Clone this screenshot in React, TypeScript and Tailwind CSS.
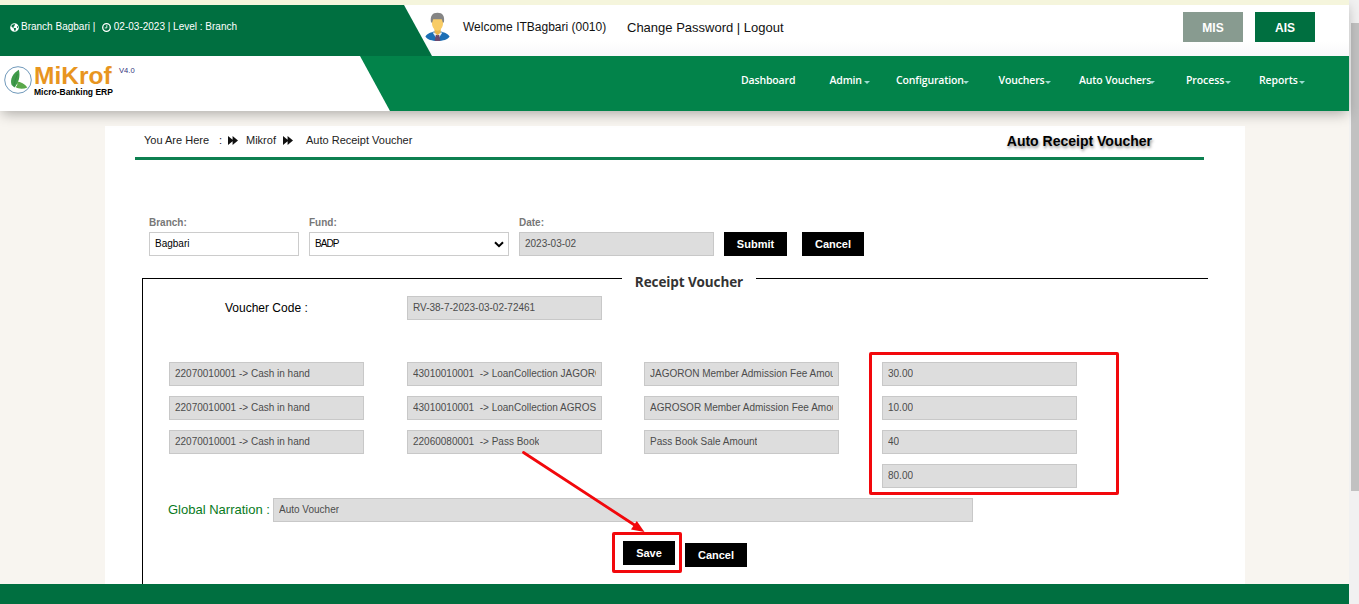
import React from "react";
import { FaGlobeAmericas } from "react-icons/fa";

function Field({ children, className = "w-[195px]" }: { children?: React.ReactNode; className?: string }) {
  return (
    <div className={`flex h-6 shrink-0 items-center border border-[#c8c8c8] bg-[#ddd] px-[5px] pb-[2px] text-[10px] text-[#4c4c4c] ${className}`}>
      <span className="overflow-hidden whitespace-pre">{children}</span>
    </div>
  );
}

function BlackButton({ children, className = "" }: { children: React.ReactNode; className?: string }) {
  return (
    <button className={`h-6 shrink-0 bg-black text-center text-[11px] font-bold text-white ${className}`}>{children}</button>
  );
}

function Label({ children }: { children: React.ReactNode }) {
  return <div className="h-[16px] text-[10px] leading-[14px] font-bold text-[#777]">{children}</div>;
}

function NavItem({ label, width, gap, caret = true }: { label: string; width: string; gap?: string; caret?: boolean }) {
  return (
    <li className={`flex shrink-0 items-center whitespace-nowrap ${width}`}>
      <span>{label}</span>
      {caret && (
        <span className={`mt-[2px] border-x-[3px] border-t-[3px] border-x-transparent border-t-[#9adbd0] ${gap ?? ""}`} />
      )}
    </li>
  );
}

function FastForward({ className = "" }: { className?: string }) {
  return (
    <svg className={`shrink-0 ${className}`} width="10" height="9" viewBox="0 0 10 9">
      <path d="M0 0 L4.6 3.8 V0 L10 4.5 L4.6 9 V5.2 L0 9 Z" fill="#111" />
    </svg>
  );
}

function Clock() {
  return (
    <svg className="mt-[2.5px] mr-[2px] ml-[7px] size-[9px] shrink-0" viewBox="0 0 9 9">
      <circle cx="4.5" cy="4.5" r="3.8" fill="none" stroke="#fff" strokeWidth="1.3" />
      <path d="M4.8 2.2 V4.9 H2.8" fill="none" stroke="#fff" strokeWidth="0.9" />
    </svg>
  );
}

function LeafLogo() {
  return (
    <svg className="shrink-0" width="28" height="28" viewBox="0 0 28 28">
      <circle cx="14" cy="14" r="13.3" fill="#fff" stroke="#4b7fa8" strokeWidth="0.8" />
      <path d="M14.8 3.8 C9 7.5 5.6 13 7.6 19 L10.6 21.4 C14.6 17 16.6 10 14.8 3.8 Z" fill="#3f9a49" />
      <path d="M13.4 8 C12 12 10.4 16 9.8 20.4" fill="none" stroke="#2a7a3c" strokeWidth="0.5" />
      <path d="M12.6 15.6 C17 15.8 20.6 18 23.4 21.4 C19 23.4 14.2 22.8 11.4 21 C13.6 20 13.8 18 12.6 15.6 Z" fill="#5aa84a" />
    </svg>
  );
}

function Avatar() {
  return (
    <svg className="shrink-0" width="25" height="30" viewBox="0 0 25 30">
      <path d="M0.4 24.5 C2 21 7 20.2 9 19.4 H16 C18 20.2 23 21 24.6 24.5 C23 27.5 18 29 12.5 29 S2 27.5 0.4 24.5 Z" fill="#1c6fb5" />
      <path d="M7.6 20.5 L12.5 28 L17.4 20.5 Z" fill="#e9eef5" />
      <path d="M10.8 23 H14.2 L15.3 29 H9.7 Z" fill="#6b4970" />
      <path d="M9.5 16 H15.7 V20.5 L12.5 23.5 L9.5 20.5 Z" fill="#e9b44b" />
      <path d="M7 8 C7 4.5 18 4.5 18 8 V12 C17.5 16 15 18.7 12.5 18.7 S7.5 16 7 12 Z" fill="#f8cc66" />
      <path d="M6 10.5 C5 4 7.4 0.8 12.5 0.8 S20 4 18.9 10.5 H17.8 L16.8 7.2 H8.2 L7.2 10.5 Z" fill="#858585" />
    </svg>
  );
}

const rows = [
  ["22070010001 -> Cash in hand", "43010010001  -> LoanCollection JAGORON", "JAGORON Member Admission Fee Amount", "30.00"],
  ["22070010001 -> Cash in hand", "43010010001  -> LoanCollection AGROSOR", "AGROSOR Member Admission Fee Amount", "10.00"],
  ["22070010001 -> Cash in hand", "22060080001  -> Pass Book", "Pass Book Sale Amount", "40"],
];

function Header() {
  return (
    <header className="relative z-10 h-[111px] shrink-0 border-t-[5px] border-[#f5f5dc] bg-white shadow-[0_5px_12px_-2px_rgba(0,0,0,0.3)]">
      <div className="flex h-[51px] items-start bg-linear-to-b from-white from-70% to-[#f8f8fa]">
        <div className="flex h-[51px] w-[432px] shrink-0 items-start bg-[#006f40] pt-[15px] pl-[10px] text-[10px] leading-[14px] whitespace-pre text-white [clip-path:polygon(0_0,404px_0,432px_100%,0_100%)]">
          <FaGlobeAmericas className="mt-[2.5px] mr-[2px] size-[9px]" />
          <span>Branch Bagbari |</span>
          <Clock />
          <span className="ml-[0.5px]">02-03-2023 | Level : Branch</span>
        </div>
        <div className="-ml-[7px] pt-[7px]"><Avatar /></div>
        <span className="ml-[13px] w-[164px] pt-[14px] text-xs leading-4 whitespace-nowrap text-[#111]">Welcome ITBagbari (0010)</span>
        <span className="pt-[15px] text-[13px] leading-4 whitespace-nowrap text-[#111]">Change Password | Logout</span>
        <div className="mt-[7px] mr-[34px] ml-auto flex gap-3 text-xs font-bold text-white">
          <button className="h-[30px] w-[60px] bg-[#889b90] pt-[2px]">MIS</button>
          <button className="h-[30px] w-[60px] bg-[#006f40] pt-[2px]">AIS</button>
        </div>
      </div>
      <div className="flex h-[55px] bg-[#02834a]">
        <div className="flex h-[55px] w-[390px] shrink-0 items-start bg-white pt-[10px] pl-[4px] [clip-path:polygon(0_0,360px_0,390px_100%,0_100%)]">
          <LeafLogo />
          <div className="ml-[2px] w-[85px] whitespace-nowrap">
            <div className="h-[21px] text-[24.5px] leading-[20px] font-bold text-[#e8951f]">MiKrof</div>
            <div className="text-[8.5px] leading-[11px] font-bold text-black">Micro-Banking ERP</div>
          </div>
          <span className="text-[7.6px] leading-[9px] text-[#33337d]">V4.0</span>
        </div>
        <ul className="ml-[351px] flex h-[50px] items-center font-['Open_Sans','Noto_Sans',sans-serif] text-[10.5px] font-semibold text-white">
          <NavItem label="Dashboard" width="w-[88.5px] tracking-[-0.15px]" caret={false} />
          <NavItem label="Admin" width="w-[66.5px] tracking-[-0.15px]" gap="ml-[2px]" />
          <NavItem label="Configuration" width="w-[102.5px] tracking-[-0.15px]" gap="-ml-px" />
          <NavItem label="Vouchers" width="w-[80.5px] tracking-[-0.15px]" />
          <NavItem label="Auto Vouchers" width="w-[107px] tracking-[-0.15px]" gap="-ml-[2px]" />
          <NavItem label="Process" width="w-[73px] tracking-[-0.1px]" gap="ml-px" />
          <NavItem label="Reports" width="w-[50px] tracking-[-0.1px]" gap="ml-px" />
        </ul>
      </div>
    </header>
  );
}

function VoucherForm() {
  return (
    <section className="mx-[37px] mt-[15px]">
      <div className="flex h-[18px] w-[1066px] items-start">
        <div className="mt-[7px] h-px w-[480px] bg-black" />
        <h2 className="w-[134px] pt-[2px] text-center font-['Open_Sans','Noto_Sans',sans-serif] text-[13.5px] leading-[18px] font-bold tracking-[-0.1px] whitespace-nowrap text-[#333]">Receipt Voucher</h2>
        <div className="mt-[7px] h-px w-[452px] bg-black" />
      </div>
      <div className="-mt-[11px] h-[306px] border-l border-black">
        <div className="flex items-center pt-[18px] pl-[82px]">
          <span className="w-[182px] text-xs text-black">Voucher Code :</span>
          <Field>RV-38-7-2023-03-02-72461</Field>
        </div>
        <div className="mt-[42px] ml-[26px] grid w-[908px] grid-cols-[238px_237px_238px_195px] gap-y-[10px]">
          {rows.map((row, r) => row.map((cell, c) => <Field key={`${r}-${c}`}>{cell}</Field>))}
          <Field className="col-start-4 w-[195px]">80.00</Field>
        </div>
        <div className="mt-[10px] ml-[25px] flex items-center">
          <span className="w-[105px] text-[13px] whitespace-nowrap text-[#087a1c]">Global Narration :</span>
          <Field className="w-[700px]">Auto Voucher</Field>
        </div>
        <div className="mt-[19px] ml-[480px] flex gap-[10px]">
          <BlackButton className="w-[52px]">Save</BlackButton>
          <BlackButton className="mt-[2px] w-[62px]">Cancel</BlackButton>
        </div>
      </div>
    </section>
  );
}

export default function App() {
  return (
    <div className="relative flex h-[604px] w-[1359px] overflow-hidden bg-[#f8f5f0] font-['Liberation_Sans',Arial,sans-serif]">
      <div className="flex w-[1349px] shrink-0 flex-col">
        <Header />
        <main className="mt-[15px] ml-[105px] h-[458px] w-[1140px] shrink-0 overflow-hidden bg-white">
          <div className="ml-[30px] flex h-[34px] w-[1069px] items-start border-b-[3px] border-[#0d8050] pl-[9px] text-[11px] leading-[14px] whitespace-nowrap text-[#222]">
            <span className="mt-[7px] w-[75px]">You Are Here</span>
            <span className="mt-[7px] w-[9px]">:</span>
            <FastForward className="mt-[10px]" />
            <span className="mt-[7px] ml-[8px] w-[37px]">Mikrof</span>
            <FastForward className="mt-[10px]" />
            <span className="mt-[7px] ml-[13px]">Auto Receipt Voucher</span>
            <h1 className="mt-[7px] mr-[52px] ml-auto text-sm leading-4 font-bold text-black [text-shadow:1px_2px_3px_rgba(0,0,0,0.45)]">Auto Receipt Voucher</h1>
          </div>
          <div className="mt-[56px] ml-[44px] flex items-end">
            <div className="w-[160px]">
              <Label>Branch:</Label>
              <div className="flex h-6 w-[150px] items-center border border-[#ccc] bg-white px-[5px] pb-[2px] text-[10px] text-black">Bagbari</div>
            </div>
            <div className="w-[210px]">
              <Label>Fund:</Label>
              <div className="flex h-6 w-[200px] items-center justify-between border border-[#ccc] bg-white pr-[4px] pl-[5px] text-[10px] text-black">
                <span className="pb-[2px] tracking-[-0.9px]">BADP</span>
                <svg width="10" height="7" viewBox="0 0 10 7">
                  <path d="M1 1.2 L5 5.2 L9 1.2" fill="none" stroke="#000" strokeWidth="2" />
                </svg>
              </div>
            </div>
            <div>
              <Label>Date:</Label>
              <Field>2023-03-02</Field>
            </div>
            <BlackButton className="ml-[10px] w-[63px]">Submit</BlackButton>
            <BlackButton className="ml-[15px] w-[62px]">Cancel</BlackButton>
          </div>
          <VoucherForm />
        </main>
        <footer className="h-5 shrink-0 bg-[#006f40]" />
      </div>
      <div className="w-[10px] bg-[#f1f1f1] pt-[23px] pl-[2px]">
        <div className="h-[468px] w-2 bg-[#c1c1c1]" />
      </div>
      <div className="absolute top-[352px] left-[869px] z-20 h-[143px] w-[250px] rounded-[2px] border-[3px] border-[#f2080c]" />
      <div className="absolute top-[532px] left-[612px] z-20 h-[41px] w-[70px] rounded-[2px] border-[3px] border-[#f2080c]" />
      <svg className="absolute top-[448px] left-[518px] z-20" width="130" height="88" viewBox="0 0 130 88">
        <path d="M5.5 4.5 L118 78" stroke="#f2080c" strokeWidth="2.8" strokeLinecap="round" />
        <path d="M126.5 84 L118.8 73 L113 81.6 Z" fill="#f2080c" />
      </svg>
    </div>
  );
}
